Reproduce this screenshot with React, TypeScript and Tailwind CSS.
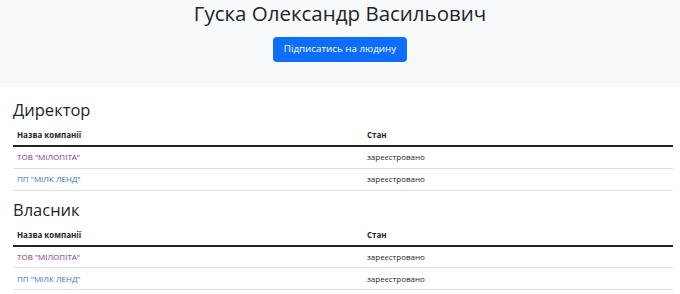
import React from "react";

interface Company {
  name: string;
  status: string;
  visited?: boolean;
}

const companies: Company[] = [
  { name: 'ТОВ "МІЛОПІТА"', status: "зареєстровано", visited: true },
  { name: 'ПП "МІЛК ЛЕНД"', status: "зареєстровано" },
];

function CompanyTable({ title, rows }: { title: string; rows: Company[] }) {
  return (
    <section className="mb-[8px]">
      <h3 className="text-[16.5px] leading-[22px] font-medium text-[#212529] mb-[4px]">{title}</h3>
      <table className="w-full border-collapse text-[8px] text-[#212529]">
        <thead>
          <tr className="border-b-2 border-[#212529]">
            <th className="w-[349px] text-left font-bold px-[4px] h-[21px]">Назва компанії</th>
            <th className="text-left font-bold px-[5px] h-[21px]">Стан</th>
          </tr>
        </thead>
        <tbody>
          {rows.map((row, i) => (
            <tr key={i} className="border-b border-[#dee2e6]">
              <td className="px-[4px] h-[22px]">
                <a href="#" className={row.visited ? "text-[#83307f]" : "text-[#2f6fd6]"}>
                  {row.name}
                </a>
              </td>
              <td className="px-[5px] h-[22px]">{row.status}</td>
            </tr>
          ))}
        </tbody>
      </table>
    </section>
  );
}

export default function App() {
  return (
    <div className="w-[680px] h-[294px] overflow-hidden bg-white font-['Open_Sans',sans-serif]">
      {/* Header */}
      <header className="bg-[#f8f9fa] h-[87px] flex flex-col items-center">
        <h1 className="text-[20.5px] leading-[26px] font-medium text-[#212529]">
          Гуска Олександр Васильович
        </h1>
        <button className="mt-[11px] h-[25px] px-[11px] rounded-[4px] bg-[#0d6efd] text-white text-[9.8px]">
          Підписатись на людину
        </button>
      </header>

      {/* Roles */}
      <main className="pl-[13px] pr-[7px] pt-[12px]">
        <CompanyTable title="Директор" rows={companies} />
        <CompanyTable title="Власник" rows={companies} />
      </main>
    </div>
  );
}
